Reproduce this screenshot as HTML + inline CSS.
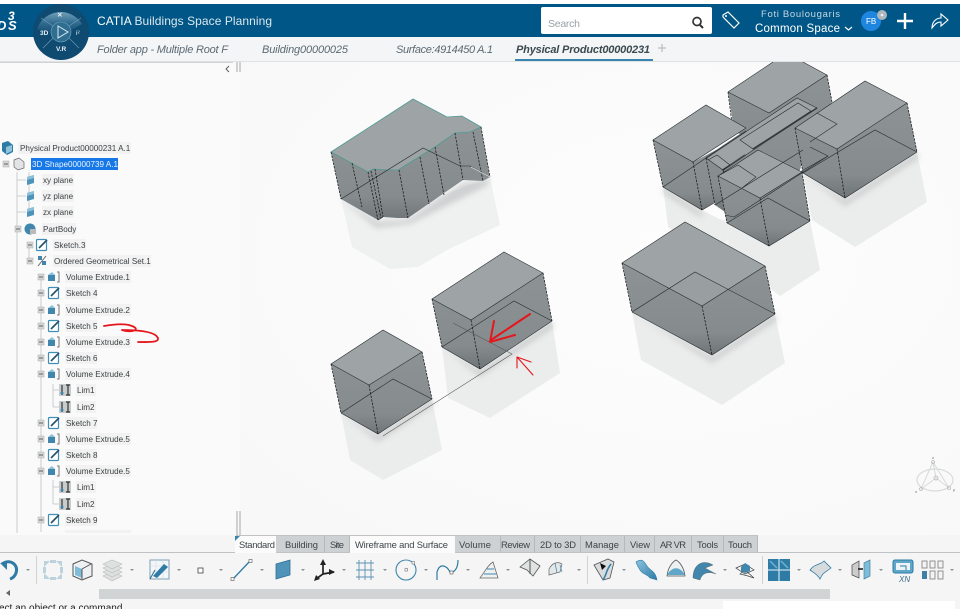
<!DOCTYPE html>
<html><head><meta charset="utf-8"><style>
html,body{margin:0;padding:0;background:#fafafa}
body{width:960px;height:609px;overflow:hidden}
svg{display:block;font-family:"Liberation Sans",sans-serif;filter:blur(.3px)}
.t{font-size:8.1px;fill:#3a3f42}
.tb{font-size:9.4px;fill:#3c4448}
.h{font-size:11px;font-style:italic;fill:#5b6a74}
.top{fill:#9ea4a6}
.side{fill:url(#sd)}
.e{fill:none;stroke:#23292b;stroke-width:.55}
.d{fill:none;stroke:#15191b;stroke-width:.75;stroke-dasharray:2.4 1.2}
.s{fill:#ebecec}
</style></head><body>
<svg width="960" height="609" viewBox="0 0 960 609" xmlns="http://www.w3.org/2000/svg">
<defs>
<linearGradient id="sd" x1="0" y1="0" x2="0" y2="1"><stop offset="0" stop-color="#8d9395"/><stop offset=".75" stop-color="#868c8e"/><stop offset="1" stop-color="#6f7577"/></linearGradient>
<radialGradient id="bg" cx=".6" cy=".4" r=".8"><stop offset="0" stop-color="#fdfdfd"/><stop offset="1" stop-color="#f8f8f8"/></radialGradient>
<linearGradient id="cp" x1="0" y1="0" x2="0" y2="1"><stop offset="0" stop-color="#6f9fb9"/><stop offset=".5" stop-color="#2c678c"/><stop offset="1" stop-color="#0e466c"/></linearGradient>
<linearGradient id="bl" x1="0" y1="0" x2="1" y2="1"><stop offset="0" stop-color="#8cc3de"/><stop offset="1" stop-color="#2b7ba6"/></linearGradient>
<filter id="b"><feGaussianBlur stdDeviation=".2"/></filter>
<filter id="b2"><feGaussianBlur stdDeviation="3"/></filter>
<g id="plane"><path d="M-4 -3L3 -5V3L-4 5Z" fill="#4f93b8"/><path d="M-4 -3L3 -5V-2L-4 0Z" fill="#8cc0da"/></g>
<g id="sk"><rect x="-5.500" y="-5.500" width="10" height="11" rx="1" fill="#fff" stroke="#3f8db5" stroke-width="1.200"/><path d="M-3 3L5 -5" stroke="#204f6c" stroke-width="1.600"/></g>
<g id="ve"><rect x="-6" y="-2" width="7" height="6" fill="#3f86ad"/><path d="M-6 -2L-2 -5L1 -2" fill="#8cc0da"/><path d="M3 -5h2v10h-2" fill="none" stroke="#777" stroke-width="1"/></g>
<g id="lim"><rect x="-6" y="-6" width="12" height="12" fill="#c9cccd"/><path d="M-3 -5V5M3 -5V5M1 -5h4M1 5h4" stroke="#333" stroke-width="1.200" fill="none"/><circle cx="-3" cy="3" r="1.500" fill="#3f86ad"/></g>
<g id="m"><rect x="-3" y="-3" width="6" height="6" fill="#d5d7d8" stroke="#aaa" stroke-width=".5"/><path d="M-2 0H2" stroke="#444" stroke-width=".8"/></g>
<path id="car" d="M-2 -1H2L0 1Z" fill="#8a8f92"/>
</defs>

<rect width="960" height="609" fill="#fafafa"/>
<rect x="240" y="62" width="720" height="474" fill="url(#bg)"/>

<!-- 3D view -->
<g filter="url(#b)">
<path class="s" d="M341 199L352 247L390 269L418 267L447 250L500 225L490 177L378 220Z" opacity=".75"/>
<path class="s" d="M341 413L350 460L383 480L442 450L432 399L378 434Z"/>
<path class="s" d="M442 347L448 398L490 418L560 373L552 321L480 369Z"/>
<path class="s" d="M632 312L641 360L722 405L785 363L775 314L712 355Z"/>
<path class="s" d="M663 187L668 227L700 250L728 240L727 223L702 210Z"/>
<path class="s" d="M803 173L812 220L855 247L927 202L917 152L845 198Z"/>
<path class="s" d="M727 223L730 258L780 296L820 270L810 221L769 246Z"/>
<path class="s" d="M690 216L700 245L740 290L790 285L770 240L727 220Z" opacity=".5"/>
<g filter="url(#b2)" fill="#aeb2b3" opacity=".5">
<path d="M341 199L378 222L408 220L463 182L490 179L486 186L410 224L376 228Z"/>
<path d="M341 413L378 436L432 399L434 405L378 442Z"/>
<path d="M442 347L480 371L552 321L554 327L480 377Z"/>
<path d="M632 312L712 357L775 314L777 320L712 363Z"/>
<path d="M803 173L845 200L917 152L919 158L845 206Z"/>
<path d="M663 187L702 212L702 218L663 193Z"/>
</g>

<!-- building A -->
<path class="side" d="M331 152L341 199L378 220L383 217L398 218L408 218L463 180L483 181L490 177L481 127L470 132L455 133L435 147L398 170L388 170L373 169L368 172Z"/>
<path class="top" d="M331 152L413 99L447 117L462 116L481 127L470 132L455 133L435 147L398 170L388 170L373 169L368 172Z"/>
<path d="M331 152L413 99L447 117L462 116L481 127L470 132L455 133L435 147L398 170L388 170L373 169L368 172Z" fill="none" stroke="#4f9a94" stroke-width=".8"/>
<path class="e" d="M341 199L423 148L460 166L470 166L490 177M378 220L383 217"/>
<path class="d" d="M331 152L341 199M352 163L362 207M368 172L378 220M371 171L381 218M375 169L383 217M399 170L408 218M420 157L429 204M435 147L444 195M455 133L463 180M473 132L483 181M481 127L490 177"/>
<path d="M471 167L490 177" stroke="#fff" stroke-width=".6"/>

<!-- building B -->
<path class="side" d="M331 364L341 413L378 434L432 399L422 352L369 385Z"/>
<path class="top" d="M331 364L383 330L422 352L369 385Z"/>
<path class="e" d="M331 364L383 330L422 352L369 385ZM341 413L393 379L432 399M341 413L378 434L432 399"/>
<path class="d" d="M331 364L341 413M369 385L378 434M422 352L432 399"/>

<!-- building C -->
<path class="side" d="M432 299L442 347L480 369L552 321L543 273L471 320Z"/>
<path class="top" d="M432 299L504 252L543 273L471 320Z"/>
<path class="e" d="M432 299L504 252L543 273L471 320ZM442 347L514 301L552 321M442 347L480 369L552 321"/>
<path class="d" d="M432 299L442 347M471 320L480 369M543 273L552 321"/>
<path d="M383 436L512 354L453 323" fill="none" stroke="#555" stroke-width=".55"/>

<!-- big box -->
<path class="side" d="M622 263L632 312L712 355L775 314L765 266L702 306Z"/>
<path class="top" d="M622 263L685 222L765 266L702 306Z"/>
<path d="M669 288L695 272L728 290L702 306Z" fill="#999fa1"/>
<path class="e" d="M622 263L685 222L765 266L702 306ZM632 312L695 272L775 314M632 312L712 355L775 314"/>
<path class="d" d="M622 263L632 312M702 306L712 355M765 266L775 314"/>

<!-- back box -->
<path class="side" d="M728 92L734 130L790 170L832 102L827 75L769 113Z"/>
<path class="top" d="M728 92L773 62L803 62L827 75L769 113Z"/>
<path class="e" d="M728 92L773 62M803 62L827 75L769 113L728 92"/>
<path class="d" d="M728 92L732 124M827 75L832 102"/>

<!-- left box -->
<path class="side" d="M653 140L663 187L702 210L725 196L716 150L693 162Z"/>
<path class="top" d="M653 140L706 105L746 128L693 162Z"/>
<path class="e" d="M653 140L706 105L746 128L693 162ZM663 187L702 210L714 203M663 187L706 158"/>
<path class="d" d="M653 140L663 187M693 162L702 210"/>

<!-- long middle -->
<path class="side" d="M706 158L715 205L725 212L800 170L817 108L723 170Z"/>
<path class="top" d="M706 158L797 98L817 108L723 170Z"/>
<path d="M706 158L746 131M723 170L745 155M753 149L817 108" stroke="#565b5d" stroke-width="1.800" fill="none"/>
<path class="e" d="M706 158L797 98L817 108L723 170ZM740 140L798 103L811 111L753 149ZM708 160L717 155L730 165L722 170"/>
<path class="d" d="M706 158L715 205M723 170L727 183"/>

<!-- right box -->
<path class="side" d="M795 128L803 173L845 198L917 152L907 103L837 149Z"/>
<path class="top" d="M795 128L865 81L907 103L837 149Z"/>
<path class="e" d="M795 128L865 81L907 103L837 149ZM803 173L875 130L917 152M803 173L845 198L917 152M817 113L837 124L810 142M810 147L828 156L800 172"/>
<path class="d" d="M795 128L803 173M837 149L845 198M907 103L917 152"/>

<!-- front box -->
<path class="side" d="M718 176L727 223L769 246L810 221L802 172L760 198Z"/>
<path class="top" d="M718 176L758 150L802 172L760 198Z"/>
<path class="e" d="M718 176L758 150L802 172L760 198ZM727 223L768 198L810 221M727 223L769 246L810 221M718 176L738 165L756 177L742 188M725 215L734 217L828 156M715 205L803 150"/>
<path class="d" d="M718 176L727 223M760 198L769 246M802 172L810 221"/>

<!-- red scribbles -->
<g fill="none" stroke="#e5141a" stroke-linecap="round" stroke-linejoin="round">
<path d="M530 314L491 340M494 321L490 342L515 335" stroke-width="2"/>
<path d="M533 375L517 357M517 357L517 368M517 357L531 362" stroke-width="1.100"/>
<path d="M104 326C115 324 125 323 132 326C142 330 130 333 122 330C135 330 155 331 158 338C159 343 148 342 138 342" stroke-width="1.800"/>
</g>

<!-- triad -->
<g fill="none" stroke="#d8dada" stroke-width=".8">
<ellipse cx="935" cy="480" rx="18" ry="11" stroke-width="1.200"/>
<path d="M933 462L921 489M933 462L949 488M921 489L936 478M949 488L936 478M933 462L936 478" stroke-width="1"/>
<circle cx="936" cy="478" r="2" stroke="#bbb"/><circle cx="921" cy="489" r="1.500" stroke="#bbb"/><circle cx="949" cy="488" r="1.500" stroke="#bbb"/><circle cx="933" cy="462" r="1.500" stroke="#bbb"/>
</g>
<g font-size="4" fill="#666"><text x="932" y="459">z</text><text x="915" y="493">x</text><text x="953" y="491">y</text></g>
</g>

<!-- panel -->
<rect x="0" y="62" width="233" height="1" fill="#cfd2d3"/>
<path d="M229 66L226 69L229 72" fill="none" stroke="#555" stroke-width=".9"/>
<path d="M237 62V72M240 62V72M237 511V535M240 511V535" stroke="#8c9194" stroke-width=".8"/>

<!-- tree -->
<g filter="url(#b)">
<g fill="#f2f2f2">
<rect x="18" y="142" width="113" height="12"/><rect x="42" y="174" width="32" height="12"/><rect x="42" y="190" width="32" height="12"/><rect x="42" y="206" width="32" height="12"/><rect x="42" y="223" width="34" height="12"/><rect x="53" y="239" width="33" height="12"/><rect x="53" y="255" width="98" height="12"/>
<rect x="65" y="271" width="66" height="12"/><rect x="65" y="287" width="32" height="12"/><rect x="65" y="304" width="66" height="12"/><rect x="65" y="320" width="32" height="12"/><rect x="65" y="336" width="66" height="12"/><rect x="65" y="352" width="32" height="12"/><rect x="65" y="368" width="66" height="12"/><rect x="76" y="384" width="20" height="12"/><rect x="76" y="401" width="20" height="12"/><rect x="65" y="417" width="32" height="12"/><rect x="65" y="433" width="66" height="12"/><rect x="65" y="449" width="32" height="12"/><rect x="65" y="465" width="66" height="12"/><rect x="76" y="481" width="20" height="12"/><rect x="76" y="498" width="20" height="12"/><rect x="65" y="514" width="32" height="12"/><rect x="65" y="530" width="66" height="3"/>
</g>
<rect x="31" y="158" width="87" height="12" fill="#1778e6"/>
<path d="M17 172V533M29 172V212M29 245V261M41 277V532M53 384V407M53 480V504" stroke="#bfc2c3" stroke-width=".8" fill="none"/>
<path d="M17 180H26M17 196H26M17 212H26M53 390H60M53 407H60M53 487H60M53 504H60" stroke="#bfc2c3" stroke-width=".8"/>
<text class="t" x="20" y="151">Physical Product00000231 A.1</text>
<text class="t" x="32" y="167" style="fill:#eaf3ff">3D Shape00000739 A.1</text>
<text class="t" x="43" y="183">xy plane</text>
<text class="t" x="43" y="199">yz plane</text>
<text class="t" x="43" y="215">zx plane</text>
<text class="t" x="43" y="232">PartBody</text>
<text class="t" x="54" y="248">Sketch.3</text>
<text class="t" x="54" y="264">Ordered Geometrical Set.1</text>
<text class="t" x="66" y="280">Volume Extrude.1</text>
<text class="t" x="66" y="296">Sketch 4</text>
<text class="t" x="66" y="313">Volume Extrude.2</text>
<text class="t" x="66" y="329">Sketch 5</text>
<text class="t" x="66" y="345">Volume Extrude.3</text>
<text class="t" x="66" y="361">Sketch 6</text>
<text class="t" x="66" y="377">Volume Extrude.4</text>
<text class="t" x="77" y="393">Lim1</text>
<text class="t" x="77" y="410">Lim2</text>
<text class="t" x="66" y="426">Sketch 7</text>
<text class="t" x="66" y="442">Volume Extrude.5</text>
<text class="t" x="66" y="458">Sketch 8</text>
<text class="t" x="66" y="474">Volume Extrude.5</text>
<text class="t" x="77" y="490">Lim1</text>
<text class="t" x="77" y="507">Lim2</text>
<text class="t" x="66" y="523">Sketch 9</text>
<path d="M2 143L8 141L13 145V152L7 155L2 151Z" fill="#2d7ba4"/><path d="M6 147L12 145V151L6 154Z" fill="#8fc4dc"/>
<path d="M14 160L19 158L24 162V168L18 170L14 167Z" fill="#e2e4e5" stroke="#666" stroke-width=".7"/>
<use href="#m" x="6" y="164"/>
<use href="#plane" x="31" y="180"/><use href="#plane" x="31" y="196"/><use href="#plane" x="31" y="212"/>
<use href="#m" x="18" y="229"/>
<circle cx="30" cy="229" r="5.500" fill="#3f86ad"/><path d="M30 229h6v5h-6z" fill="#bbb"/>
<use href="#m" x="30" y="245"/><use href="#sk" x="42" y="245"/>
<use href="#m" x="30" y="261"/>
<g transform="translate(42 261)"><rect x="-4" y="-5" width="4" height="4" fill="#3f86ad"/><rect x="0" y="0" width="4" height="4" fill="#3f86ad"/><path d="M-4 5L4 -5" stroke="#666"/></g>
<use href="#m" x="41" y="277"/><use href="#ve" x="54" y="277"/>
<use href="#m" x="41" y="293"/><use href="#sk" x="54" y="293"/>
<use href="#m" x="41" y="310"/><use href="#ve" x="54" y="310"/>
<use href="#m" x="41" y="326"/><use href="#sk" x="54" y="326"/>
<use href="#m" x="41" y="342"/><use href="#ve" x="54" y="342"/>
<use href="#m" x="41" y="358"/><use href="#sk" x="54" y="358"/>
<use href="#m" x="41" y="374"/><use href="#ve" x="54" y="374"/>
<use href="#lim" x="65" y="390"/><use href="#lim" x="65" y="407"/>
<use href="#m" x="41" y="423"/><use href="#sk" x="54" y="423"/>
<use href="#m" x="41" y="439"/><use href="#ve" x="54" y="439"/>
<use href="#m" x="41" y="455"/><use href="#sk" x="54" y="455"/>
<use href="#m" x="41" y="471"/><use href="#ve" x="54" y="471"/>
<use href="#lim" x="65" y="487"/><use href="#lim" x="65" y="504"/>
<use href="#m" x="41" y="520"/><use href="#sk" x="54" y="520"/>
</g>

<!-- header -->
<rect y="0" width="960" height="4" fill="#fff"/>
<rect y="4" width="960" height="33" fill="#005686"/>
<rect y="37" width="960" height="24" fill="#f4f5f6"/>
<rect y="61" width="960" height="1" fill="#dfe2e4"/>
<g fill="#fff" font-style="italic" font-weight="bold">
<text x="8" y="20" font-size="12">3</text>
<text x="-3" y="30" font-size="13">D</text>
<text x="8" y="30" font-size="13">S</text>
</g>
<circle cx="61" cy="32" r="28" fill="#0f4a71"/>
<path d="M37 29A25 25 0 0 1 82 24L61 36Z" fill="url(#cp)"/>
<circle cx="61" cy="32" r="10" fill="#2f6e90" stroke="#7aa9c2" stroke-width=".6"/>
<path d="M41 18L53 26M81 18L69 26M53 38L43 48M69 38L79 48" stroke="#6f9fb9" stroke-width=".6"/>
<path d="M58 26L68 32L58 38Z" fill="none" stroke="#dcebf3" stroke-width="1"/>
<g fill="#e8f0f5" font-size="6.500" font-weight="bold"><text x="40" y="35">3D</text><text x="76" y="35" font-weight="normal">i²</text><text x="57" y="17">✕</text><text x="56" y="51">V.R</text></g>
<text x="97" y="25" fill="#fff" font-size="12" textLength="175"><tspan>CATIA</tspan> <tspan fill="#dbe7ee">Buildings Space Planning</tspan></text>
<text class="h" x="97" y="53" textLength="131">Folder app - Multiple Root F</text>
<text class="h" x="262" y="53" textLength="86">Building00000025</text>
<text class="h" x="396" y="53" textLength="97">Surface:4914450 A.1</text>
<text x="516" y="53" font-size="11" font-style="italic" font-weight="bold" fill="#3c4a52" textLength="134">Physical Product00000231</text>
<rect x="515" y="59" width="138" height="2" fill="#3a85b0"/>
<path d="M658 48H666M662 44V52" stroke="#b9bfc2" stroke-width="1.200"/>
<rect x="541" y="7" width="171" height="27" rx="2" fill="#fff"/>
<text x="548" y="27" font-size="10.500" fill="#9aa1a5" textLength="32">Search</text>
<circle cx="697" cy="21.500" r="4" fill="none" stroke="#333" stroke-width="1.700"/><path d="M700 25L703 28" stroke="#333" stroke-width="2"/>
<path d="M722 16L727 13L738 24L733 29L722 18Z" fill="none" stroke="#fff" stroke-width="1.200" transform="translate(1 -1)"/><circle cx="726" cy="16" r="1" fill="#fff"/>
<text x="761" y="17" font-size="9.500" fill="#c7d7e2" textLength="79">Foti Boulougaris</text>
<text x="755" y="32" font-size="11.500" fill="#fff" textLength="85">Common Space</text>
<path d="M845 27L848.500 30L852 27" fill="none" stroke="#fff" stroke-width="1.200"/>
<circle cx="871" cy="21" r="10" fill="#1f86e0"/><text x="866" y="24" font-size="8" fill="#fff">FB</text>
<circle cx="882" cy="15" r="5" fill="#aeb7bb"/><circle cx="882" cy="15" r="1.300" fill="#eef"/>
<path d="M897 21H913M905 13V29" stroke="#fff" stroke-width="2.400"/>
<path d="M932 28C932 21 937 18 941 18V14L948 20L941 26V22C937 22 935 24 932 28Z" fill="none" stroke="#fff" stroke-width="1.100"/>

<!-- tabs -->
<rect x="0" y="535" width="960" height="74" fill="#f5f5f5"/>
<rect x="0" y="552" width="960" height="1" fill="#bfc3c5"/>
<rect x="236" y="536" width="522" height="16" fill="#cdd1d3"/>
<rect x="235" y="536" width="41" height="17" fill="#fbfbfb"/>
<rect x="350" y="536" width="105" height="17" fill="#fbfbfb"/>
<path d="M235 536H240L235 541Z" fill="#3a85b0"/>
<path d="M324.500 536V552M349.500 536V552M500.500 536V552M534.500 536V552M580.500 536V552M624.500 536V552M654.500 536V552M691.500 536V552M723.500 536V552M757.500 536V552M236 535.500H758" stroke="#aeb3b5" stroke-width=".8"/>
<text class="tb" x="239" y="548" textLength="36">Standard</text>
<text class="tb" x="285" y="548" textLength="33">Building</text>
<text class="tb" x="330" y="548" textLength="14">Site</text>
<text class="tb" x="355" y="548" textLength="93">Wireframe and Surface</text>
<text class="tb" x="459" y="548" textLength="32">Volume</text>
<text class="tb" x="501" y="548" textLength="29">Review</text>
<text class="tb" x="540" y="548" textLength="36">2D to 3D</text>
<text class="tb" x="585" y="548" textLength="34">Manage</text>
<text class="tb" x="630" y="548" textLength="20">View</text>
<text class="tb" x="660" y="548" textLength="26">AR VR</text>
<text class="tb" x="697" y="548" textLength="21">Tools</text>
<text class="tb" x="728" y="548" textLength="24">Touch</text>

<!-- scrollbar/status -->
<rect x="99" y="589" width="731" height="10" fill="#d0d4d5"/>
<path d="M10 590V596L6 593Z" fill="#666"/>
<text x="-1" y="611" font-size="10" fill="#222">ect an object or a command</text>
<rect x="723" y="601" width="232" height="8" fill="#fff"/>

<!-- toolbar icons -->
<path d="M36.500 556V584M587.500 556V584M762.500 556V584" stroke="#d0d3d4"/>
<g filter="url(#b)">
<path d="M2 564C10 558 19 565 16 573C15 576 13 578 10 579" fill="none" stroke="#2f7ba5" stroke-width="3"/><path d="M0 563H7V570Z" fill="#2f7ba5"/>
<use href="#car" x="28" y="570"/>
<g fill="#bcd2de"><path d="M44 561h6l-6 6zM62 561h-6l6 6zM44 579h6l-6 -6zM62 579h-6l6 -6z"/><path d="M50 560h6v3h-6zM50 577h6v3h-6zM43 567h3v6h-3zM60 567h3v6h-3z"/></g>
<path d="M73 564L82 560L92 564V576L82 580L73 576Z" fill="#eef1f2" stroke="#555" stroke-width="1"/><path d="M75 566L82 569V578L75 575Z" fill="#7fbcd8"/><path d="M82 569L91 564" stroke="#555"/><path d="M82 569V579" stroke="#555"/>
<g fill="#dfe1e1" stroke="#b8bbbc" stroke-width=".6"><path d="M103 576L112 572L122 576L112 581Z"/><path d="M103 572L112 568L122 572L112 577Z"/><path d="M103 568L112 564L122 568L112 573Z"/><path d="M103 564L112 560L122 564L112 569Z"/></g>
<use href="#car" x="132" y="570"/>
<rect x="150" y="560" width="19" height="19" fill="#f2f6f8" stroke="#7f9fb2"/><path d="M156 560V579M163 560V579M150 566H169M150 572H169" stroke="#cfdde5" stroke-width=".6"/><path d="M150 579L155 570" stroke="#2c6a8f"/><path d="M153 576L164 564L168 567L157 578Z" fill="#2f7ba5"/>
<use href="#car" x="179" y="570"/>
<rect x="198" y="568" width="5" height="5" fill="#fff" stroke="#444" stroke-width=".8"/>
<use href="#car" x="221" y="570"/>
<path d="M233 579L250 561" stroke="#2f7ba5" stroke-width="1.300"/><rect x="231" y="577.500" width="3" height="3" fill="#fff" stroke="#555" stroke-width=".6"/><rect x="249" y="559.500" width="3" height="3" fill="#fff" stroke="#555" stroke-width=".6"/>
<use href="#car" x="262" y="570"/>
<path d="M276 564L290 560V575L276 579Z" fill="#4f93b8" stroke="#2f6f94" stroke-width=".8"/>
<use href="#car" x="303" y="570"/>
<path d="M323 562V574L316 579M323 574L334 572" stroke="#222" stroke-width="1.700" fill="none"/><path d="M323 559L320 565H326ZM335 572L329 569V575ZM314 581L316 575L320 579Z" fill="#222"/>
<use href="#car" x="344" y="570"/>
<path d="M356 563H374M356 570H374M356 577H374M359 560V580M365 560V580M371 560V580" stroke="#5c93b2" stroke-width=".9"/>
<use href="#car" x="385" y="570"/>
<circle cx="406" cy="570" r="10" fill="none" stroke="#3f86ad" stroke-width="1.100"/><rect x="405" y="568.500" width="2.500" height="2.500" fill="#fff" stroke="#555" stroke-width=".5"/><rect x="412" y="561.500" width="2.500" height="2.500" fill="#fff" stroke="#555" stroke-width=".5"/>
<use href="#car" x="426" y="570"/>
<path d="M437 580V572C440 562 447 566 450 572C453 573 458 570 458 560" fill="none" stroke="#2f7ba5" stroke-width="1.200"/><rect x="450" y="571" width="3" height="3" fill="#fff" stroke="#555" stroke-width=".6"/>
<use href="#car" x="468" y="570"/>
<path d="M480 578H498L493 562C488 565 486 570 480 578Z" fill="#eef1f2" stroke="#666" stroke-width=".8"/><path d="M484 574H496M487 569H494" stroke="#3f86ad"/>
<use href="#car" x="508" y="570"/>
<path d="M520 567L530 559L540 566L533 576L527 570Z" fill="#dfe3e4" stroke="#555" stroke-width=".8"/><path d="M530 559V574" stroke="#555"/>
<path d="M549 569C552 563 558 561 562 564L560 572L549 575Z" fill="#e4e7e8" stroke="#666" stroke-width=".7"/><path d="M555 563L557 573M560 565L562 572" stroke="#3f86ad" stroke-width=".7"/>
<use href="#car" x="579" y="570"/>
<path d="M594 565L608 559L614 562L610 578L603 580Z" fill="#d9dcdd" stroke="#555" stroke-width=".8"/><path d="M611 564C606 570 607 574 603 580" fill="none" stroke="#2f7ba5" stroke-width="1.500"/><path d="M600 563L602 570L606 566Z" fill="#111"/>
<use href="#car" x="624" y="570"/>
<path d="M636 562C642 558 644 561 647 566C650 571 655 570 657 580L650 578C647 574 642 574 640 570C638 567 637 565 636 562Z" fill="url(#bl)" stroke="#2f7ba5" stroke-width=".6"/>
<path d="M667 576C668 566 674 561 676 560C680 562 684 568 685 576Z" fill="#eef1f2" stroke="#555" stroke-width=".8"/><path d="M667 575C672 566 680 566 685 575Z" fill="#5fa6c9"/>
<path d="M693 578C693 564 703 559 713 565L705 568L716 574C708 571 702 573 700 580Z" fill="#3f86ad" stroke="#555" stroke-width=".4"/>
<use href="#car" x="725" y="570"/>
<path d="M736 568L745 564L754 570L745 574ZM740 574L745 570L754 578L748 576Z" fill="#f2f3f3" stroke="#444" stroke-width=".7"/><path d="M741 567L745 563L750 566V571L745 573L741 571Z" fill="#3f86ad"/>
<rect x="768" y="559" width="22" height="22" fill="#2f7ba5"/><path d="M779 559V581M768 570H790" stroke="#bfe0ee" stroke-width="1.300"/><path d="M770 561l7 7M781 561l7 7" stroke="#6eb2d3" stroke-width="1.500"/>
<use href="#car" x="799" y="570"/>
<path d="M810 570C814 564 820 565 824 561L831 568C826 572 823 572 820 579C817 574 814 573 810 570Z" fill="#d8dbdc" stroke="#2f7ba5" stroke-width=".8"/>
<use href="#car" x="840" y="570"/>
<path d="M852 565L859 561V578L852 575Z" fill="#ccc" stroke="#444" stroke-width=".7"/><path d="M858 569H863" stroke="#111" stroke-width="1.400"/><path d="M864 563L870 560V576L864 579Z" fill="#7fbcd8" stroke="#3f86ad" stroke-width=".7"/>
<use href="#car" x="881" y="570"/>
<rect x="893" y="560" width="20" height="13" rx="2" fill="#5fa6c9" stroke="#2f7ba5"/><rect x="896" y="563" width="14" height="7" fill="#eaf4f9"/><path d="M900 566H906V570" fill="none" stroke="#2f7ba5"/>
<text x="899" y="582" font-size="8" font-style="italic" fill="#3c6c88">XN</text>
<g fill="#f2f3f3" stroke="#888" stroke-width=".9"><rect x="922" y="561" width="5" height="7"/><rect x="930" y="561" width="5" height="7"/><rect x="938" y="561" width="5" height="7"/><rect x="930" y="571" width="5" height="8"/><rect x="938" y="571" width="5" height="8"/></g><rect x="922" y="571" width="5" height="8" fill="#3f7fa4"/>
<use href="#car" x="952" y="570"/>
</g>
</svg>
</body></html>
